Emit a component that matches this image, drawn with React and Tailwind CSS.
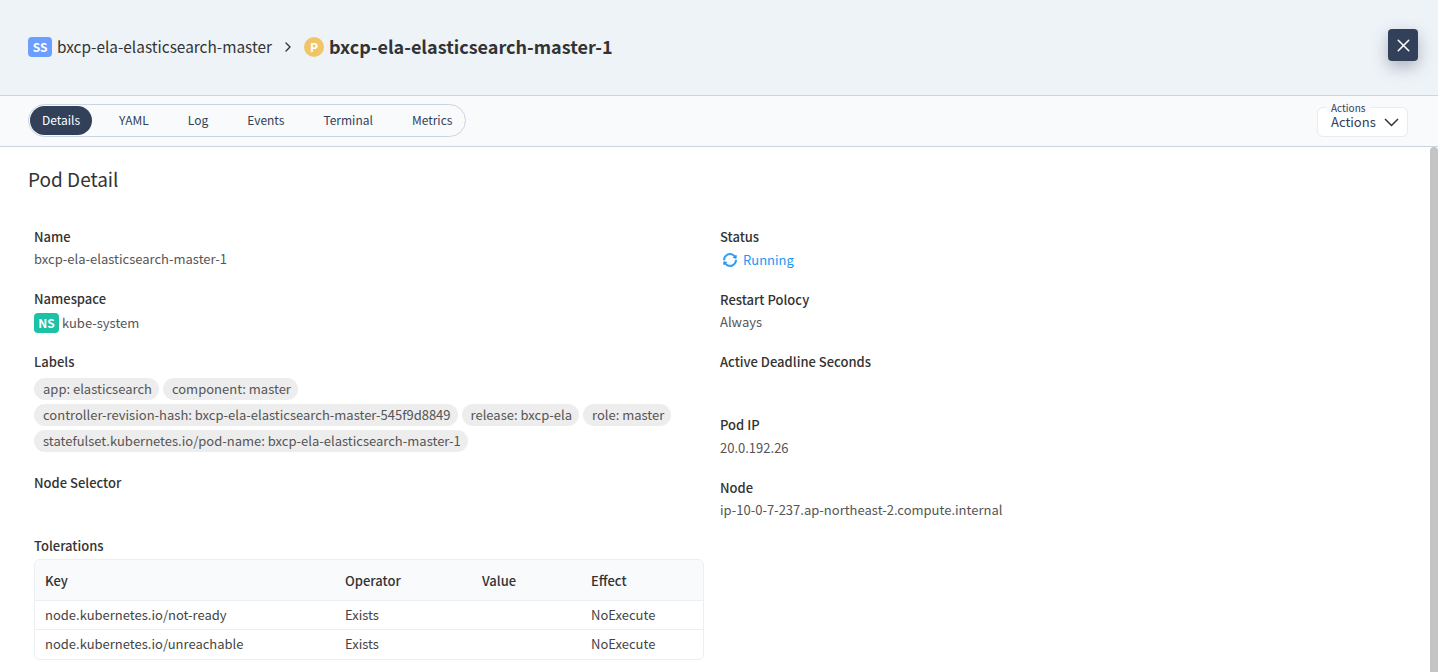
import { X, ChevronRight } from 'lucide-react';
import { AiOutlineSync } from 'react-icons/ai';

const tabs = ['Details', 'YAML', 'Log', 'Events', 'Terminal', 'Metrics'];

const labels = [
  ['app: elasticsearch', 'component: master'],
  ['controller-revision-hash: bxcp-ela-elasticsearch-master-545f9d8849', 'release: bxcp-ela', 'role: master'],
  ['statefulset.kubernetes.io/pod-name: bxcp-ela-elasticsearch-master-1'],
];

const tolerations = [
  ['node.kubernetes.io/not-ready', 'Exists', '', 'NoExecute'],
  ['node.kubernetes.io/unreachable', 'Exists', '', 'NoExecute'],
];

function Title({ children }) {
  return <div className="text-[13px] leading-[20px] font-medium text-[#333]">{children}</div>;
}

function Value({ children }) {
  return <div className="text-[13px] leading-[20px] text-[#555]">{children}</div>;
}

export default function App() {
  return (
    <div className="relative h-[672px] overflow-hidden bg-white font-['Noto_Sans_CJK_KR',sans-serif]">
      <header className="flex h-[96px] items-center justify-between border-b border-[#cbd5e1] bg-[#eef3f8] pb-[2px] pl-[28px] pr-[20px]">
        <div className="flex items-center">
          <span className="flex h-[20px] w-[24px] items-center justify-center rounded-[4px] bg-[#6c9eff] text-[12px] font-semibold text-white">SS</span>
          <span className="ml-[5px] text-[15.4px] font-normal text-[#333]">bxcp-ela-elasticsearch-master</span>
          <ChevronRight className="ml-[8px] h-[16px] w-[16px] text-[#333]" strokeWidth={2} />
          <span className="ml-[8px] flex h-[20px] w-[20px] items-center justify-center rounded-full bg-[#f0c568] text-[12px] font-semibold text-white">P</span>
          <span className="ml-[5px] text-[18px] font-semibold text-[#333]">bxcp-ela-elasticsearch-master-1</span>
        </div>
        <button className="mb-[3px] flex h-[32px] w-[30px] items-center justify-center rounded-[4px] bg-[#334059] text-white shadow-[0_6px_16px_rgba(51,64,89,0.35)]">
          <X className="h-[21px] w-[21px]" strokeWidth={1.75} />
        </button>
      </header>

      <div className="flex h-[51px] items-center justify-between border-b border-[#cbd5e1] bg-[#f8fafc] pl-[28px] pr-[30px]">
        <div className="mb-[1px] flex h-[33px] items-center gap-[15px] rounded-full border border-[#cbd5e1] px-[1px]">
          {tabs.map((tab, i) => (
            <div
              key={tab}
              className={`flex h-[29px] items-center rounded-full px-[12px] pb-[1px] text-[12px] ${i === 0 ? 'bg-[#334059] text-white' : 'text-[#334059]'}`}
            >
              {tab}
            </div>
          ))}
        </div>
        <div className="relative mt-[2px] flex h-[30px] w-[91px] items-center rounded-[6px] border border-[#e8ebf0] bg-white pl-[13px]">
          <span className="absolute -top-[6px] left-[8px] bg-[#f8fafc] px-[5px] text-[10px] leading-[11px] text-[#334059]">Actions</span>
          <span className="text-[13px] leading-[16px] text-[#334059]">Actions</span>
          <svg className="ml-[8px]" width="15" height="9" viewBox="0 0 15 9" fill="none" stroke="#333" strokeWidth="1.5">
            <path d="M1 1l6.5 6.5L14 1" />
          </svg>
        </div>
      </div>

      <main className="px-[28px]">
        <h2 className="mt-[18px] text-[19px] leading-[28px] font-normal text-[#333]">Pod Detail</h2>
        <div className="mt-[34px] grid grid-cols-[670px_1fr] gap-x-[16px] pl-[6px]">
          <div>
            <Title>Name</Title>
            <div className="mt-[2px]"><Value>bxcp-ela-elasticsearch-master-1</Value></div>

            <div className="mt-[20px]"><Title>Namespace</Title></div>
            <div className="mt-[4px] flex items-center">
              <span className="flex h-[20px] w-[25px] items-center justify-center rounded-[4px] bg-[#1cc2a5] text-[12px] font-semibold text-white">NS</span>
              <span className="ml-[3px]"><Value>kube-system</Value></span>
            </div>

            <div className="mt-[19px]"><Title>Labels</Title></div>
            <div className="mt-[6px] flex flex-col gap-[4px]">
              {labels.map((row) => (
                <div key={row[0]} className="flex gap-[4px]">
                  {row.map((label) => (
                    <span key={label} className="flex h-[22px] items-center whitespace-nowrap rounded-full bg-[#ededed] pl-[9px] pr-[7px] text-[13px] text-[#555]">{label}</span>
                  ))}
                </div>
              ))}
            </div>

            <div className="mt-[21px]"><Title>Node Selector</Title></div>

            <div className="mt-[43px]"><Title>Tolerations</Title></div>
            <div className="mt-[3px] overflow-hidden rounded-[6px] border border-[#ebeef2]">
              <div className="grid h-[41px] grid-cols-[300px_137px_109px_1fr] items-center border-b border-[#ebeef2] bg-[#f8fafc] px-[10px] pt-[2px] text-[13px] font-medium text-[#333]">
                <div>Key</div>
                <div>Operator</div>
                <div>Value</div>
                <div>Effect</div>
              </div>
              {tolerations.map((row, i) => (
                <div key={row[0]} className={`grid h-[29px] grid-cols-[300px_137px_109px_1fr] items-center px-[10px] text-[13px] text-[#444] ${i === 0 ? 'border-b border-[#ebeef2]' : 'pb-[2px]'}`}>
                  {row.map((cell, j) => <div key={j}>{cell}</div>)}
                </div>
              ))}
            </div>
          </div>

          <div>
            <Title>Status</Title>
            <div className="mt-[3px] flex items-center text-[13px] leading-[20px] text-[#2196f3]">
              <AiOutlineSync className="ml-[2px] h-[16px] w-[16px]" stroke="currentColor" strokeWidth={50} />
              <span className="ml-[5px]">Running</span>
            </div>

            <div className="mt-[20px]"><Title>Restart Polocy</Title></div>
            <div className="mt-[2px]"><Value>Always</Value></div>

            <div className="mt-[20px]"><Title>Active Deadline Seconds</Title></div>

            <div className="mt-[43px]"><Title>Pod IP</Title></div>
            <div className="mt-[3px]"><Value>20.0.192.26</Value></div>

            <div className="mt-[20px]"><Title>Node</Title></div>
            <div className="mt-[2px]"><Value>ip-10-0-7-237.ap-northeast-2.compute.internal</Value></div>
          </div>
        </div>
      </main>

      <div className="absolute bottom-0 right-0 top-[147px] w-[8px] rounded-t-full bg-[#c4c4c4]" />
    </div>
  );
}
